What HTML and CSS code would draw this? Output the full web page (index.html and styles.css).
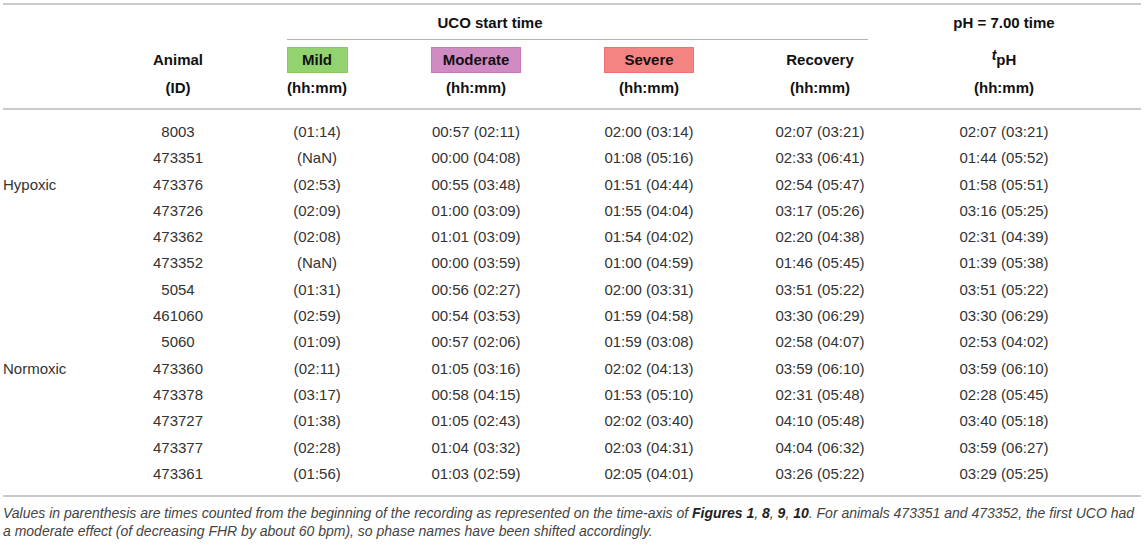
FILE: index.html
```html
<!DOCTYPE html>
<html lang="en">
<head>
  <meta charset="UTF-8" />
  <meta name="viewport" content="width=device-width, initial-scale=1.0" />
  <title>UCO phase timing</title>
  <link rel="stylesheet" href="styles.css">
</head>
<body>
  <div class="table">
    <div class="head">
      <div class="span-uco">UCO start time</div>
      <div class="uco-rule"></div>
      <div class="span-ph">pH = 7.00 time</div>

      <div class="hcell c-animal"><span class="name">Animal</span><span class="unit">(ID)</span></div>
      <div class="hcell c-mild"><span class="tag mild">Mild</span><span class="unit">(hh:mm)</span></div>
      <div class="hcell c-moderate"><span class="tag moderate">Moderate</span><span class="unit">(hh:mm)</span></div>
      <div class="hcell c-severe"><span class="tag severe">Severe</span><span class="unit">(hh:mm)</span></div>
      <div class="hcell c-recovery"><span class="name">Recovery</span><span class="unit">(hh:mm)</span></div>
      <div class="hcell c-tph"><span class="name"><i>t</i><sub>pH</sub></span><span class="unit">(hh:mm)</span></div>
    </div>

    <div class="body">
      <div class="group hypoxic">Hypoxic</div>
      <div class="group normoxic">Normoxic</div>

      <div class="c-animal">8003</div><div class="c-mild">(01:14)</div><div class="c-moderate">00:57 (02:11)</div><div class="c-severe">02:00 (03:14)</div><div class="c-recovery">02:07 (03:21)</div><div class="c-tph">02:07 (03:21)</div>
      <div class="c-animal">473351</div><div class="c-mild">(NaN)</div><div class="c-moderate">00:00 (04:08)</div><div class="c-severe">01:08 (05:16)</div><div class="c-recovery">02:33 (06:41)</div><div class="c-tph">01:44 (05:52)</div>
      <div class="c-animal">473376</div><div class="c-mild">(02:53)</div><div class="c-moderate">00:55 (03:48)</div><div class="c-severe">01:51 (04:44)</div><div class="c-recovery">02:54 (05:47)</div><div class="c-tph">01:58 (05:51)</div>
      <div class="c-animal">473726</div><div class="c-mild">(02:09)</div><div class="c-moderate">01:00 (03:09)</div><div class="c-severe">01:55 (04:04)</div><div class="c-recovery">03:17 (05:26)</div><div class="c-tph">03:16 (05:25)</div>
      <div class="c-animal">473362</div><div class="c-mild">(02:08)</div><div class="c-moderate">01:01 (03:09)</div><div class="c-severe">01:54 (04:02)</div><div class="c-recovery">02:20 (04:38)</div><div class="c-tph">02:31 (04:39)</div>
      <div class="c-animal">473352</div><div class="c-mild">(NaN)</div><div class="c-moderate">00:00 (03:59)</div><div class="c-severe">01:00 (04:59)</div><div class="c-recovery">01:46 (05:45)</div><div class="c-tph">01:39 (05:38)</div>
      <div class="c-animal">5054</div><div class="c-mild">(01:31)</div><div class="c-moderate">00:56 (02:27)</div><div class="c-severe">02:00 (03:31)</div><div class="c-recovery">03:51 (05:22)</div><div class="c-tph">03:51 (05:22)</div>
      <div class="c-animal">461060</div><div class="c-mild">(02:59)</div><div class="c-moderate">00:54 (03:53)</div><div class="c-severe">01:59 (04:58)</div><div class="c-recovery">03:30 (06:29)</div><div class="c-tph">03:30 (06:29)</div>
      <div class="c-animal">5060</div><div class="c-mild">(01:09)</div><div class="c-moderate">00:57 (02:06)</div><div class="c-severe">01:59 (03:08)</div><div class="c-recovery">02:58 (04:07)</div><div class="c-tph">02:53 (04:02)</div>
      <div class="c-animal">473360</div><div class="c-mild">(02:11)</div><div class="c-moderate">01:05 (03:16)</div><div class="c-severe">02:02 (04:13)</div><div class="c-recovery">03:59 (06:10)</div><div class="c-tph">03:59 (06:10)</div>
      <div class="c-animal">473378</div><div class="c-mild">(03:17)</div><div class="c-moderate">00:58 (04:15)</div><div class="c-severe">01:53 (05:10)</div><div class="c-recovery">02:31 (05:48)</div><div class="c-tph">02:28 (05:45)</div>
      <div class="c-animal">473727</div><div class="c-mild">(01:38)</div><div class="c-moderate">01:05 (02:43)</div><div class="c-severe">02:02 (03:40)</div><div class="c-recovery">04:10 (05:48)</div><div class="c-tph">03:40 (05:18)</div>
      <div class="c-animal">473377</div><div class="c-mild">(02:28)</div><div class="c-moderate">01:04 (03:32)</div><div class="c-severe">02:03 (04:31)</div><div class="c-recovery">04:04 (06:32)</div><div class="c-tph">03:59 (06:27)</div>
      <div class="c-animal">473361</div><div class="c-mild">(01:56)</div><div class="c-moderate">01:03 (02:59)</div><div class="c-severe">02:05 (04:01)</div><div class="c-recovery">03:26 (05:22)</div><div class="c-tph">03:29 (05:25)</div>
    </div>

    <p class="note">Values in parenthesis are times counted from the beginning of the recording as represented on the time-axis of <b>Figures 1</b>, <b>8</b>, <b>9</b>, <b>10</b>. For animals 473351 and 473352, the first UCO had<br>a moderate effect (of decreasing FHR by about 60 bpm), so phase names have been shifted accordingly.</p>
  </div>
</body>
</html>
```

FILE: styles.css
```css
* {
  margin: 0;
  padding: 0;
  box-sizing: border-box;
}
body {
  font-family: 'Liberation Sans', Arial, sans-serif;
  background: #fff;
  color: #333;
  font-size: 15px;
}
.table {
  width: 1138px;
  margin: 3px 0 0 3px;
  --cols: 115px 120px 158px 160px 186px 156px 212px 31px;
}

/* header */
.head {
  display: grid;
  grid-template-columns: var(--cols);
  grid-template-rows: 35px 68px;
  border-top: 2px solid #cbcbcb;
  border-bottom: 2px solid #cbcbcb;
  color: #111;
  font-weight: bold;
}
.span-uco {
  grid-row: 1;
  grid-column: 3 / 6;
  text-align: center;
  align-self: center;
}
.span-ph {
  grid-row: 1;
  grid-column: 7;
  text-align: center;
  align-self: center;
}
.uco-rule {
  grid-row: 1;
  grid-column: 3 / 7;
  align-self: end;
  margin: 0 30px 0 49px;
  border-bottom: 1px solid #b4b4b4;
}
.hcell {
  grid-row: 2;
  display: flex;
  flex-direction: column;
  align-items: center;
  padding-top: 7px;
}
.name {
  height: 26px;
  line-height: 26px;
}
.name i {
  position: relative;
  top: -5px;
  font-size: 14px;
}
.name sub {
  font-size: 15px;
  vertical-align: baseline;
}
.unit {
  line-height: 18px;
  margin-top: 6px;
}
.tag {
  display: inline-block;
  height: 26px;
  line-height: 24px;
  border: 1px solid;
  text-align: center;
}
.mild {
  width: 61px;
  background: #93d36f;
  border-color: #86cc60;
}
.moderate {
  width: 90px;
  background: #d18bc3;
  border-color: #c878b8;
}
.severe {
  width: 90px;
  background: #f38482;
  border-color: #f07270;
}

/* columns */
.c-animal { grid-column: 2; }
.c-mild { grid-column: 3; }
.c-moderate { grid-column: 4; }
.c-severe { grid-column: 5; }
.c-recovery { grid-column: 6; }
.c-tph { grid-column: 7; }

/* body */
.body {
  display: grid;
  grid-template-columns: var(--cols);
  grid-auto-rows: 26.3px;
  grid-auto-flow: dense;
  padding: 9px 0 8px;
  border-bottom: 2px solid #cbcbcb;
  text-align: center;
  line-height: 26.3px;
}
.group {
  grid-column: 1;
  text-align: left;
  align-self: center;
}
.hypoxic { grid-row: 1 / span 5; }
.normoxic { grid-row: 6 / span 9; }

.note {
  margin-top: 7px;
  font-size: 14px;
  line-height: 18px;
  font-style: italic;
  color: #444;
}
.note b {
  color: #222;
}
```
